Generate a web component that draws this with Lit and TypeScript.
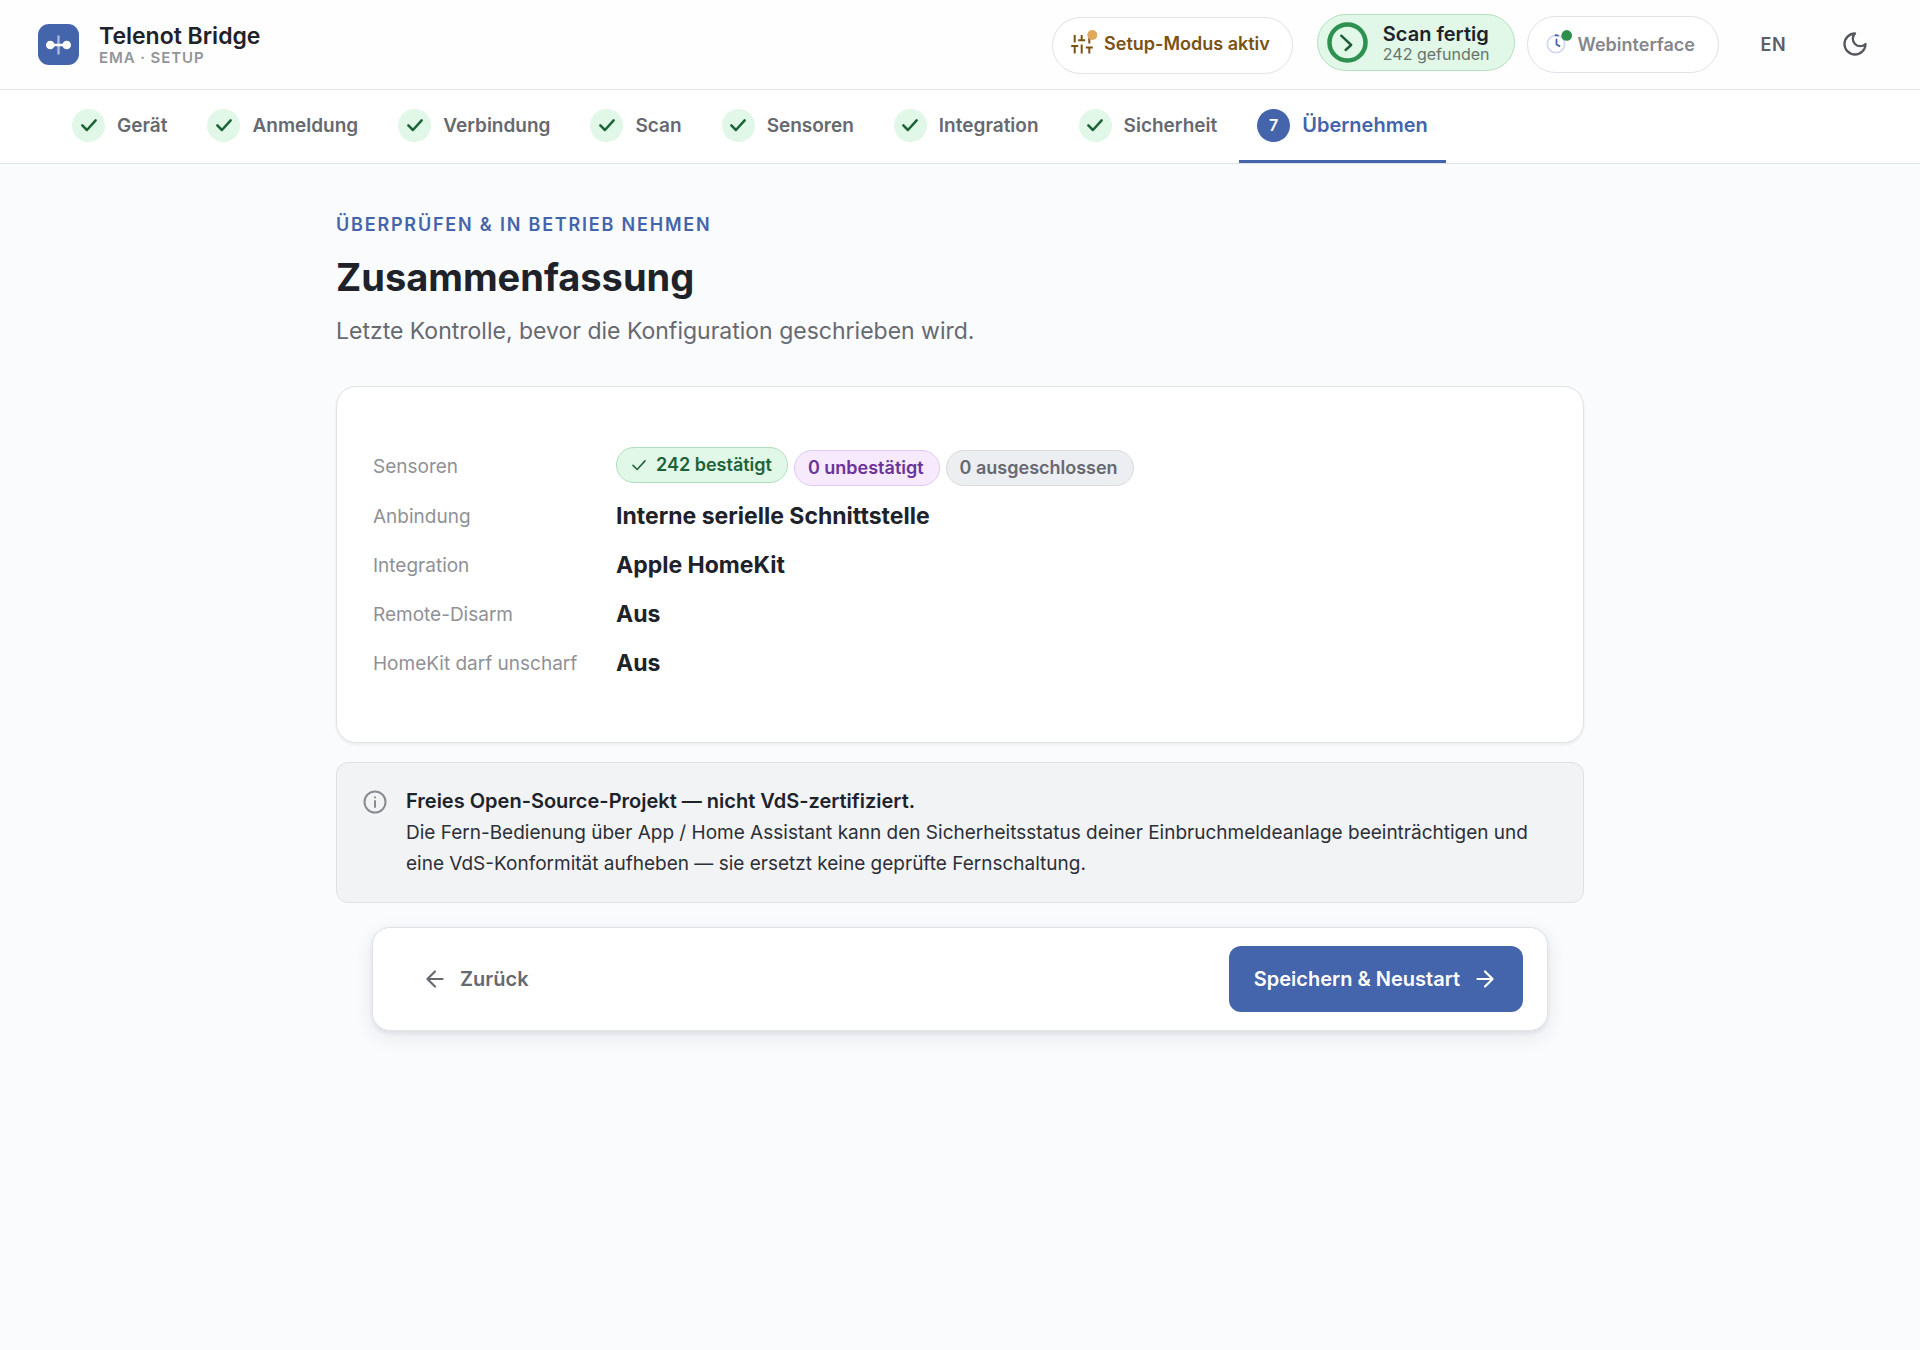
import { LitElement, html, css, svg, nothing } from "lit";
import { customElement, property } from "lit/decorators.js";
import { classMap } from "lit/directives/class-map.js";

const ICONS = {
  check: svg`<path d="M4 12.5l5.5 5.5L20 6.5" />`,
  left: svg`<path d="M12 19l-7-7 7-7M19 12H5" />`,
  right: svg`<path d="M5 12h14M12 5l7 7-7 7" />`,
  info: svg`<circle cx="12" cy="12" r="10.5" /><path d="M12 11v6M12 7.2v.4" />`,
  moon: svg`<path d="M12 3a6 6 0 0 0 9 9 9 9 0 1 1-9-9Z" />`,
};

@customElement("ui-icon")
class UiIcon extends LitElement {
  @property() name: keyof typeof ICONS = "check";

  static styles = css`
    :host {
      display: inline-flex;
      flex: none;
      width: 26px;
      height: 26px;
    }
    svg {
      width: 100%;
      height: 100%;
      fill: none;
      stroke: currentColor;
      stroke-width: var(--stroke, 2);
      stroke-linecap: round;
      stroke-linejoin: round;
    }
  `;

  render() {
    return html`<svg viewBox="0 0 24 24" aria-hidden="true">${ICONS[this.name]}</svg>`;
  }
}

@customElement("app-header")
class AppHeader extends LitElement {
  static styles = css`
    :host {
      display: block;
    }
    header {
      display: flex;
      align-items: center;
      gap: 20px;
      padding: 14px 38px 15px;
      background: #fefefe;
      border-bottom: 1px solid #e1e2e5;
    }
    button {
      font: inherit;
      color: inherit;
      background: none;
      border: none;
      cursor: pointer;
    }
    svg {
      display: block;
      flex: none;
      overflow: visible;
      fill: none;
      stroke-linecap: round;
      stroke-linejoin: round;
    }
    .logo {
      width: 41px;
      height: 41px;
    }
    .brand {
      flex: 1;
    }
    .name {
      font-size: 23px;
      line-height: 26px;
      font-weight: 600;
      color: #20222a;
    }
    .sub {
      font-size: 15px;
      line-height: 17px;
      font-weight: 600;
      letter-spacing: 0.06em;
      color: #929498;
    }
    .actions {
      display: flex;
      align-items: center;
      gap: 12px;
      height: 60px;
    }
    .pill {
      box-sizing: border-box;
      display: flex;
      align-items: center;
      height: 57px;
      border: 1px solid #e0e2e5;
      border-radius: 29px;
      background: #fff;
      font-size: 18px;
      font-weight: 600;
      white-space: nowrap;
    }
    .setup {
      align-self: flex-end;
      gap: 10px;
      margin-right: 12px;
      padding: 0 22px 4px 17px;
      color: #7a5213;
    }
    .setup svg {
      width: 24px;
      height: 24px;
      stroke: #7a5213;
      stroke-width: 2;
    }
    .scan {
      align-self: flex-start;
      gap: 15px;
      padding: 0 24px 0 9px;
      background: #e1f7e7;
      border-color: #b5e0c0;
      text-align: left;
    }
    .scan svg {
      width: 41px;
      height: 41px;
    }
    .scan-title {
      display: block;
      font-size: 20px;
      line-height: 22px;
      color: #20222a;
    }
    .scan-count {
      display: block;
      font-size: 16px;
      line-height: 18px;
      font-weight: 400;
      color: #66756c;
    }
    .web {
      gap: 12px;
      padding: 0 23px 0 18px;
      color: #85878c;
    }
    .web svg {
      width: 20px;
      height: 20px;
    }
    .lang {
      width: 85px;
      height: 54px;
      padding: 0;
      font-size: 18px;
      font-weight: 600;
      letter-spacing: 0.04em;
      color: #5c5f66;
    }
    .theme {
      display: flex;
      align-items: center;
      justify-content: center;
      width: 54px;
      height: 54px;
      padding: 0;
      color: #55585f;
    }
    .theme ui-icon {
      width: 28px;
      height: 28px;
    }
  `;

  render() {
    return html`
      <header>
        <svg class="logo" viewBox="0 0 41 41" aria-hidden="true">
          <rect width="41" height="41" rx="11" fill="#4464ab" />
          <path d="M20.5 12.5v17" stroke="#fff" stroke-opacity=".55" stroke-width="2.4" />
          <path d="M12.3 21h16.4" stroke="#fff" stroke-width="2.6" />
          <circle cx="12.3" cy="21" r="4.3" fill="#fff" />
          <circle cx="28.7" cy="21" r="4.3" fill="#fff" />
        </svg>
        <div class="brand">
          <div class="name">Telenot Bridge</div>
          <div class="sub">EMA · SETUP</div>
        </div>
        <div class="actions">
          <button class="pill setup" type="button">
            <svg viewBox="0 0 24 24" aria-hidden="true">
              <path
                stroke-linecap="butt"
                d="M4.7 3v7.5M1.2 14h7M4.7 14v7.5M11.7 3v5.3M8.2 8.3h7M11.7 12.5v9M19.3 5v6.5M15.8 15.5h7M19.3 15.5v6"
              />
              <circle cx="22.3" cy="3" r="5" fill="#e0a95c" stroke="none" />
            </svg>
            Setup-Modus aktiv
          </button>
          <button class="pill scan" type="button">
            <svg viewBox="0 0 41 41" aria-hidden="true">
              <circle cx="20.5" cy="20.5" r="18" stroke="#2f9150" stroke-width="4.5" />
              <path d="M14.2 13.7l10 9.3-5.6 5" stroke="#1c5f35" stroke-width="2.4" />
            </svg>
            <span>
              <span class="scan-title">Scan fertig</span>
              <span class="scan-count">242 gefunden</span>
            </span>
          </button>
          <button class="pill web" type="button">
            <svg viewBox="0 0 20 20" aria-hidden="true">
              <circle cx="10" cy="10" r="8.7" stroke="#d3daf0" stroke-width="1.8" />
              <path d="M9.4 1.3q1.4-.2 2.6.2M10.5 5.5v5l3 1.6" stroke="#4464ab" stroke-width="1.8" />
              <circle cx="20.7" cy="1.4" r="5.3" fill="#2a8f4a" />
            </svg>
            Webinterface
          </button>
          <button class="lang" type="button">EN</button>
          <button class="theme" type="button" aria-label="Dunkles Design">
            <ui-icon name="moon"></ui-icon>
          </button>
        </div>
      </header>
    `;
  }
}

const STEPS = [
  "Gerät",
  "Anmeldung",
  "Verbindung",
  "Scan",
  "Sensoren",
  "Integration",
  "Sicherheit",
  "Übernehmen",
];

@customElement("step-nav")
class StepNav extends LitElement {
  static styles = css`
    :host {
      display: block;
    }
    ol {
      display: flex;
      gap: 4px;
      margin: 0;
      padding: 0 54px;
      list-style: none;
      background: #fff;
      border-bottom: 1px solid #dfe2e5;
    }
    .step {
      box-sizing: border-box;
      display: flex;
      align-items: center;
      gap: 12px;
      height: 73px;
      padding: 0 18px;
      border-bottom: 3px solid transparent;
      font-size: 19px;
      font-weight: 600;
      color: #666970;
      text-decoration: none;
      white-space: nowrap;
    }
    .badge {
      display: flex;
      align-items: center;
      justify-content: center;
      width: 33px;
      height: 33px;
      border-radius: 50%;
      background: #e1f7e7;
      color: #1c6338;
      font-size: 16px;
    }
    .badge ui-icon {
      width: 20px;
      height: 20px;
      --stroke: 3;
    }
    .current {
      font-size: 20px;
      color: #4464ab;
      border-bottom-color: #4464ab;
    }
    .current .badge {
      background: #4464ab;
      color: #fff;
    }
  `;

  render() {
    const last = STEPS.length - 1;
    return html`
      <nav aria-label="Einrichtung">
        <ol>
          ${STEPS.map(
            (label, i) => html`
              <li>
                <a
                  href="#"
                  class=${classMap({ step: true, current: i === last })}
                  aria-current=${i === last ? "step" : nothing}
                >
                  <span class="badge">${i === last ? i : html`<ui-icon name="check"></ui-icon>`}</span>
                  ${label}
                </a>
              </li>
            `
          )}
        </ol>
      </nav>
    `;
  }
}

const SUMMARY = [
  ["Anbindung", "Interne serielle Schnittstelle"],
  ["Integration", "Apple HomeKit"],
  ["Remote-Disarm", "Aus"],
  ["HomeKit darf unscharf", "Aus"],
];

@customElement("app-root")
class AppRoot extends LitElement {
  static styles = css`
    :host {
      display: block;
      min-height: 100vh;
      background: #fafbfd;
      font-family: Inter, "Liberation Sans", sans-serif;
      color: #20222a;
    }
    main {
      box-sizing: border-box;
      max-width: 1296px;
      margin: 0 auto;
      padding: 48px 24px;
    }
    h1,
    p,
    dl,
    dd {
      margin: 0;
    }
    .eyebrow {
      font-size: 18px;
      line-height: 26px;
      font-weight: 600;
      letter-spacing: 0.1em;
      color: #4464ab;
    }
    h1 {
      margin-top: 14px;
      font-size: 38px;
      line-height: 50px;
      font-weight: 700;
    }
    .lead {
      margin-top: 12px;
      font-size: 23px;
      line-height: 34px;
      color: #666970;
    }
    .card {
      display: grid;
      grid-template-columns: 207px 1fr;
      align-items: center;
      gap: 12px 36px;
      margin-top: 38px;
      padding: 60px 36px;
      background: #fff;
      border: 1px solid #dfe1e4;
      border-radius: 20px;
      box-shadow: 0 2px 3px rgba(30, 35, 50, 0.06);
    }
    dt {
      font-size: 19px;
      color: #8f9196;
      white-space: nowrap;
    }
    dd {
      font-size: 23px;
      line-height: 37px;
      font-weight: 700;
    }
    .chips {
      display: flex;
      align-items: flex-end;
      gap: 6px;
      height: 39px;
    }
    .chip {
      box-sizing: border-box;
      display: flex;
      align-items: center;
      gap: 8px;
      height: 36px;
      padding: 0 15px 0 13px;
      border: 1px solid;
      border-radius: 18px;
      font-size: 18px;
      line-height: 24px;
      font-weight: 600;
    }
    .chip ui-icon {
      width: 18px;
      height: 18px;
    }
    .ok {
      align-self: flex-start;
      background: #e1f7e7;
      border-color: #b0dfbd;
      color: #1d6338;
    }
    .open {
      background: #f7eafe;
      border-color: #e1c8f5;
      color: #6b3399;
    }
    .excluded {
      background: #edeef2;
      border-color: #d8dadd;
      color: #666970;
    }
    .note {
      display: flex;
      align-items: flex-start;
      gap: 19px;
      margin-top: 19px;
      padding: 23px 26px;
      background: #f2f3f5;
      border: 1px solid #dfe1e4;
      border-radius: 12px;
      font-size: 19px;
      line-height: 31px;
      color: #2c2f36;
    }
    .note ui-icon {
      width: 24px;
      height: 24px;
      margin-top: 4px;
      color: #8a8c91;
    }
    .note strong {
      display: block;
      font-size: 20px;
      font-weight: 600;
      color: #20222a;
    }
    .bar {
      display: flex;
      align-items: center;
      justify-content: space-between;
      margin: 24px 36px 0;
      padding: 18px 24px;
      background: #fff;
      border: 1px solid #e0e2e5;
      border-radius: 18px;
      box-shadow: 0 6px 20px rgba(30, 35, 50, 0.09), 0 2px 5px rgba(30, 35, 50, 0.07);
    }
    .button {
      display: flex;
      align-items: center;
      gap: 12px;
      height: 66px;
      padding: 0 25px;
      border: none;
      border-radius: 12px;
      background: none;
      font: 600 20px/24px Inter, "Liberation Sans", sans-serif;
      color: #666970;
      cursor: pointer;
    }
    .primary {
      background: #4464ab;
      color: #fff;
    }
  `;

  render() {
    return html`
      <app-header></app-header>
      <step-nav></step-nav>
      <main>
        <p class="eyebrow">ÜBERPRÜFEN &amp; IN BETRIEB NEHMEN</p>
        <h1>Zusammenfassung</h1>
        <p class="lead">Letzte Kontrolle, bevor die Konfiguration geschrieben wird.</p>
        <dl class="card">
          <dt>Sensoren</dt>
          <dd class="chips">
            <span class="chip ok"><ui-icon name="check"></ui-icon>242 bestätigt</span>
            <span class="chip open">0 unbestätigt</span>
            <span class="chip excluded">0 ausgeschlossen</span>
          </dd>
          ${SUMMARY.map(([term, value]) => html`<dt>${term}</dt><dd>${value}</dd>`)}
        </dl>
        <div class="note" role="note">
          <ui-icon name="info"></ui-icon>
          <p>
            <strong>Freies Open-Source-Projekt — nicht VdS-zertifiziert.</strong>
            Die Fern-Bedienung über App / Home Assistant kann den Sicherheitsstatus deiner
            Einbruchmeldeanlage beeinträchtigen und eine VdS-Konformität aufheben — sie ersetzt keine
            geprüfte Fernschaltung.
          </p>
        </div>
        <div class="bar">
          <button class="button" type="button"><ui-icon name="left"></ui-icon>Zurück</button>
          <button class="button primary" type="button">
            Speichern &amp; Neustart<ui-icon name="right"></ui-icon>
          </button>
        </div>
      </main>
    `;
  }
}
